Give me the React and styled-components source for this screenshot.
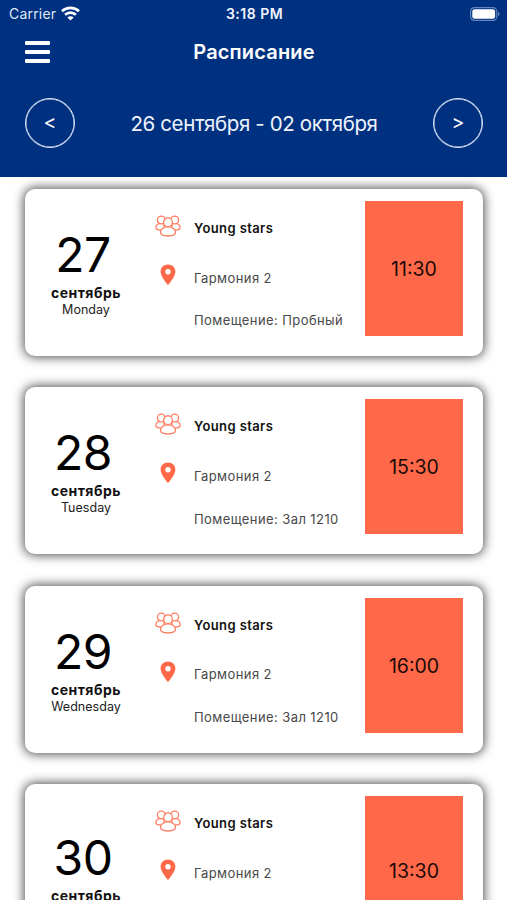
import React from "react";
import styled, { createGlobalStyle } from "styled-components";

const GlobalStyle = createGlobalStyle`
  * { box-sizing: border-box; }
  body {
    margin: 0;
    background: #fff;
    font-family: Inter, "Liberation Sans", sans-serif;
  }
`;

const Screen = styled.div`
  width: 507px;
  height: 900px;
  overflow: hidden;
  background: #fff;
`;

const Header = styled.header`
  height: 177px;
  background: #003180;
  color: #fff;
`;

const StatusBar = styled.div`
  display: grid;
  grid-template-columns: 1fr auto 1fr;
  align-items: center;
  height: 27px;
  padding: 0 7px 0 9px;
`;

const Carrier = styled.div`
  display: flex;
  align-items: center;
  gap: 5px;
  font-size: 14px;
  letter-spacing: 0.2px;
  color: #dfe8f8;
`;

const Clock = styled.div`
  font-size: 14px;
  font-weight: 600;
  letter-spacing: 0.5px;
  color: #f1f5fd;
`;

const BatterySlot = styled.div`
  display: flex;
  justify-content: flex-end;
`;

const TitleBar = styled.div`
  display: grid;
  grid-template-columns: 25px 1fr 25px;
  align-items: center;
  height: 50px;
  padding: 0 24px 0 25px;
`;

const MenuButton = styled.button`
  display: flex;
  flex-direction: column;
  gap: 5px;
  padding: 0;
  border: 0;
  background: none;
`;

const MenuLine = styled.span`
  width: 25px;
  height: 4px;
  border-radius: 1px;
  background: #fff;
`;

const Title = styled.h1`
  margin: 0;
  text-align: center;
  font-size: 20px;
  line-height: 24px;
  font-weight: 600;
  letter-spacing: 0.15px;
`;

const WeekBar = styled.div`
  display: flex;
  align-items: center;
  justify-content: space-between;
  height: 92px;
  padding: 0 24px 0 25px;
`;

const RoundButton = styled.button`
  width: 50px;
  height: 50px;
  padding: 0 0 2px;
  border: 1px solid #dbe5f7;
  border-radius: 50%;
  background: none;
  box-shadow: inset 0 0 0 0.5px #dbe5f7;
  color: #fff;
  font: 400 19.5px/44px Inter, sans-serif;
`;

const WeekRange = styled.div`
  font-size: 20.5px;
  letter-spacing: -0.38px;
  color: #eef3fc;
  white-space: nowrap;
`;

const List = styled.main`
  display: flex;
  flex-direction: column;
  gap: 31.4px;
  padding: 12px 24px 0 25px;
`;

const Card = styled.article`
  display: grid;
  grid-template-columns: 122px 47px 1fr 98px;
  flex: none;
  height: ${({ $tall }) => ($tall ? 181 : 167)}px;
  padding: 12px 20px 0 0;
  border-radius: 10px;
  background: #fff;
  box-shadow: 0 0 11px 1px rgba(0, 0, 0, 0.72);
`;

const DateColumn = styled.div`
  display: flex;
  flex-direction: column;
  align-items: center;
  padding-top: ${({ $tall }) => ($tall ? 33 : 25)}px;
  color: #000;
`;

const Day = styled.div`
  margin-left: -6px;
  font-size: 48px;
  line-height: 58px;
  letter-spacing: -0.5px;
`;

const Month = styled.div`
  font-size: 14px;
  line-height: 17px;
  font-weight: 700;
  letter-spacing: 0.5px;
  color: #111;
`;

const Weekday = styled.div`
  font-size: 12.5px;
  line-height: 17px;
  letter-spacing: 0.03px;
  color: #222;
`;

const IconColumn = styled.div`
  display: flex;
  flex-direction: column;
  align-items: center;
  padding: 14px 5px 0 0;
  gap: 27px;
`;

const Details = styled.div`
  padding-top: 17px;
`;

const Group = styled.div`
  height: 49.5px;
  font-size: 13px;
  line-height: 20px;
  font-weight: 600;
  letter-spacing: 0.4px;
  color: #111;
  white-space: nowrap;
`;

const Place = styled.div`
  height: 42.8px;
  font-size: 13px;
  line-height: 20px;
  letter-spacing: 0.41px;
  color: #484848;
  white-space: nowrap;
`;

const TimeBox = styled.div`
  display: flex;
  align-items: center;
  justify-content: center;
  height: ${({ $tall }) => ($tall ? 149 : 135)}px;
  padding-top: 1px;
  background: #ff694a;
  color: #200a06;
  font-size: 19.5px;
`;

const WifiIcon = () => (
  <svg width="19" height="15" viewBox="0 0 19 15" fill="none" stroke="#fff" strokeWidth="2.7">
    <path d="M1 5.2C5.8.7 13.2.7 18 5.2" />
    <path d="M4.1 8.8c3.1-2.9 7.7-2.9 10.8 0" />
    <path d="M6.4 11.5c1.8-1.6 4.4-1.6 6.2 0L9.5 14.4z" fill="#fff" stroke="none" />
  </svg>
);

const BatteryIcon = () => (
  <svg width="30" height="14" viewBox="0 0 30 14">
    <rect x="0.6" y="0.6" width="26.2" height="12.8" rx="3.8" fill="none" stroke="#6485bd" strokeWidth="1.2" />
    <rect x="2.3" y="2.2" width="22.8" height="9.6" rx="2.3" fill="#fff" />
    <path d="M28 4.8c2 .7 2 3.7 0 4.4z" fill="#6485bd" />
  </svg>
);

const PeopleIcon = () => (
  <svg width="26" height="22" viewBox="0 0 26 22" fill="#fff" stroke="#ff7d62" strokeWidth="1.3">
    <path d="M6 8.3C3 8.3.9 10.3.9 12.6c0 1.7 1.6 2.6 5.1 2.6h3V8.3z" />
    <path d="M20 8.3c3 0 5.1 2 5.1 4.3 0 1.7-1.6 2.6-5.1 2.6h-3V8.3z" />
    <circle cx="6.3" cy="5" r="3.9" />
    <circle cx="19.7" cy="5" r="3.9" />
    <path d="M13 11.8c-4.5 0-7.5 2.5-7.5 5.3 0 2.5 2.4 3.9 7.5 3.9s7.5-1.4 7.5-3.9c0-2.8-3-5.3-7.5-5.3z" />
    <circle cx="13" cy="7.3" r="4.4" />
  </svg>
);

const PinIcon = () => (
  <svg width="16" height="22" viewBox="0 0 16 22" fill="#ff694a">
    <path
      fillRule="evenodd"
      d="M8 .5C3.8.5.6 3.6.6 7.7c0 5.1 7.4 13.4 7.4 13.4s7.4-8.3 7.4-13.4C15.4 3.6 12.2.5 8 .5zm0 4.6a2.7 2.7 0 1 1 0 5.4 2.7 2.7 0 0 1 0-5.4z"
    />
  </svg>
);

const lessons = [
  { day: 27, weekday: "Monday", room: "Пробный", time: "11:30" },
  { day: 28, weekday: "Tuesday", room: "Зал 1210", time: "15:30" },
  { day: 29, weekday: "Wednesday", room: "Зал 1210", time: "16:00" },
  { day: 30, time: "13:30", tall: true },
];

const LessonCard = ({ day, weekday, room, time, tall }) => (
  <Card $tall={tall}>
    <DateColumn $tall={tall}>
      <Day>{day}</Day>
      <Month>сентябрь</Month>
      {weekday && <Weekday>{weekday}</Weekday>}
    </DateColumn>
    <IconColumn>
      <PeopleIcon />
      <PinIcon />
    </IconColumn>
    <Details>
      <Group>Young stars</Group>
      <Place>Гармония 2</Place>
      {room && <Place>Помещение: {room}</Place>}
    </Details>
    <TimeBox $tall={tall}>{time}</TimeBox>
  </Card>
);

export default function App() {
  return (
    <Screen>
      <GlobalStyle />
      <Header>
        <StatusBar>
          <Carrier>
            Carrier
            <WifiIcon />
          </Carrier>
          <Clock>3:18 PM</Clock>
          <BatterySlot>
            <BatteryIcon />
          </BatterySlot>
        </StatusBar>
        <TitleBar>
          <MenuButton aria-label="Меню">
            <MenuLine />
            <MenuLine />
            <MenuLine />
          </MenuButton>
          <Title>Расписание</Title>
        </TitleBar>
        <WeekBar>
          <RoundButton>&lt;</RoundButton>
          <WeekRange>26 сентября - 02 октября</WeekRange>
          <RoundButton>&gt;</RoundButton>
        </WeekBar>
      </Header>
      <List>
        {lessons.map((lesson) => (
          <LessonCard key={lesson.day} {...lesson} />
        ))}
      </List>
    </Screen>
  );
}
